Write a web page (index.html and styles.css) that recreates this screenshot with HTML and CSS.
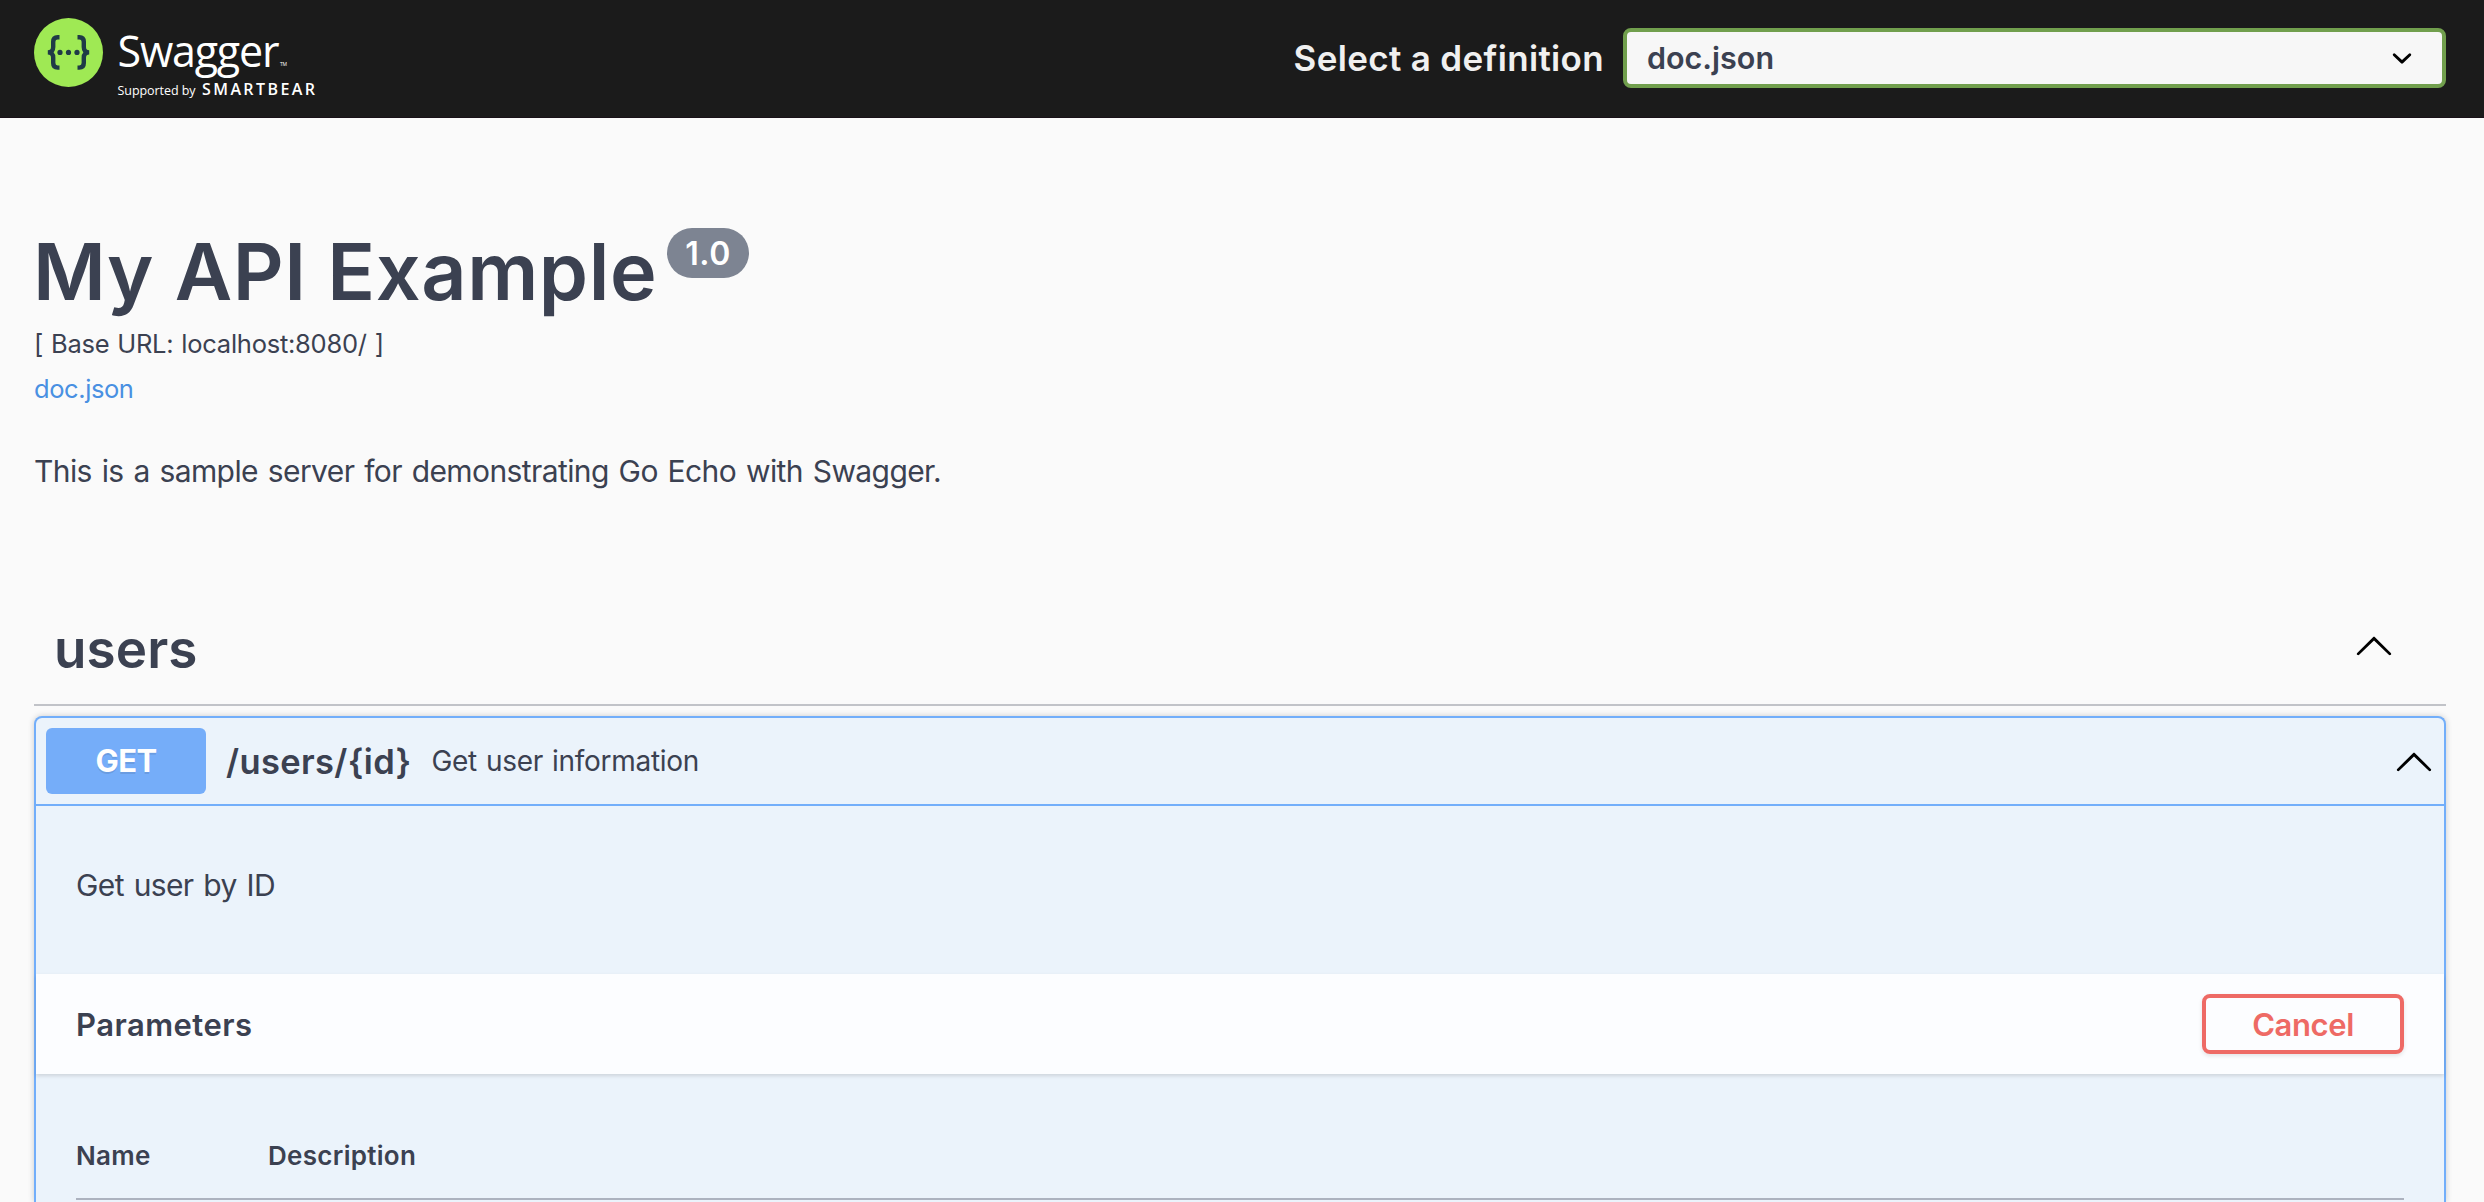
FILE: index.html
```html
<!DOCTYPE html>
<html lang="en">
<head>
<meta charset="utf-8">
<title>Swagger UI</title>
<link rel="stylesheet" href="styles.css">
</head>
<body>
<header class="topbar">
  <a class="logo" aria-label="Swagger">
    <svg class="logo-svg" width="290" height="90" viewBox="0 0 290 90">
      <circle cx="34.5" cy="34.5" r="34.5" fill="#9fe954"/>
      <g fill="none" stroke="#1f3a47" stroke-width="4.4">
        <path d="M25.500 19.200h-1.800c-3.200 0-4.500 1.600-4.500 4.600v5.200c0 3.600-1.500 5.400-5.400 5.400c3.900 0 5.400 1.800 5.400 5.400v5.200c0 3 1.300 4.600 4.500 4.600h1.800"/>
        <path d="M43.500 19.200h1.800c3.200 0 4.500 1.600 4.500 4.600v5.200c0 3.600 1.500 5.400 5.400 5.400c-3.900 0-5.400 1.800-5.400 5.400v5.200c0 3-1.300 4.600-4.500 4.600h-1.800"/>
      </g>
      <g fill="#1f3a47"><circle cx="26" cy="34.400" r="2.600"/><circle cx="34.500" cy="34.400" r="2.600"/><circle cx="43" cy="34.400" r="2.600"/></g>
      <text class="logo-name" x="83.500" y="48.800" textLength="162">Swagger</text>
      <text class="logo-tm" x="246" y="48.400" textLength="7">TM</text>
      <text class="logo-by" x="83.500" y="77" textLength="78">Supported by</text>
      <text class="logo-brand" x="168" y="77" textLength="113">SMARTBEAR</text>
    </svg>
  </a>
  <div class="definition">
    <span class="definition-label">Select a definition</span>
    <div class="select">
      <span class="select-value">doc.json</span>
      <svg class="select-arrow" width="40" height="40" viewBox="0 0 20 20"><path d="M13.418 7.859a.695.695 0 01.978 0 .68.68 0 010 .969l-3.908 3.83a.697.697 0 01-.979 0l-3.908-3.83a.68.68 0 010-.969.695.695 0 01.978 0L10 11l3.418-3.141z"/></svg>
    </div>
  </div>
</header>
<main class="page">
  <section class="info">
    <div class="title-row">
      <h1 class="title">My API Example</h1>
      <span class="version">1.0</span>
    </div>
    <div class="base-url">[ Base URL: localhost:8080/ ]</div>
    <a class="doc-link">doc.json</a>
    <p class="description">This is a sample server for demonstrating Go Echo with Swagger.</p>
  </section>
  <section class="tag">
    <div class="tag-header">
      <h2 class="tag-name">users</h2>
      <svg class="chevron" width="40" height="40" viewBox="0 0 20 20"><path d="M17.418 14.908c.272.268.709.268.979 0s.271-.701 0-.969l-7.908-7.830c-.270-.268-.707-.268-.979 0l-7.908 7.830c-.270.268-.270.701 0 .969.271.268.709.268.979 0L10 7.767l7.418 7.141z"/></svg>
    </div>
    <article class="operation">
      <div class="summary">
        <span class="method">GET</span>
        <span class="path">/users/{id}</span>
        <span class="summary-text">Get user information</span>
        <svg class="chevron" width="40" height="40" viewBox="0 0 20 20"><path d="M17.418 14.908c.272.268.709.268.979 0s.271-.701 0-.969l-7.908-7.830c-.270-.268-.707-.268-.979 0l-7.908 7.830c-.270.268-.270.701 0 .969.271.268.709.268.979 0L10 7.767l7.418 7.141z"/></svg>
      </div>
      <p class="operation-text">Get user by ID</p>
      <div class="section-header">
        <h4 class="section-title">Parameters</h4>
        <button class="cancel">Cancel</button>
      </div>
      <div class="parameters">
        <div class="columns">
          <span class="column-name">Name</span>
          <span>Description</span>
        </div>
      </div>
    </article>
  </section>
</main>
</body>
</html>
```
FILE: styles.css
```css
* {
  box-sizing: border-box;
}

body {
  margin: 0;
  background: #fafafa;
  color: #3b4151;
  font-family: Inter, "Liberation Sans", sans-serif;
}

h1, h2, h4, p {
  margin: 0;
}

.topbar {
  display: flex;
  align-items: flex-start;
  justify-content: space-between;
  height: 118px;
  padding: 18px 38px 0 34px;
  background: #1b1b1b;
  border-bottom: 1px solid #191118;
}

.logo-svg {
  display: block;
}

.logo-svg text {
  fill: #fff;
  font-family: "Open Sans", sans-serif;
}

.logo-svg .logo-name {
  font-size: 43px;
}

.logo-svg .logo-tm {
  font-size: 5px;
}

.logo-svg .logo-by {
  font-size: 12.5px;
}

.logo-svg .logo-brand {
  font-size: 16px;
  font-weight: 600;
}

.definition {
  display: flex;
  align-items: center;
  gap: 19px;
  height: 60px;
  margin-top: 10px;
}

.definition-label {
  color: #f0f0f0;
  font-size: 35px;
  font-weight: 600;
  line-height: 58px;
  letter-spacing: 0.33px;
}

.select {
  display: flex;
  align-items: center;
  justify-content: space-between;
  width: 823px;
  height: 60px;
  padding: 0 20px;
  background: #f7f7f7;
  border: 4px solid #719f4d;
  border-radius: 8px;
}

.select-value {
  padding-bottom: 1px;
  font-size: 30.5px;
  font-weight: 600;
}

.page {
  padding: 110px 38px 0 34px;
}

.info {
  height: 362px;
}

.title-row {
  display: flex;
  align-items: flex-start;
  justify-content: space-between;
  width: 715px;
}

.title {
  margin-left: -1px;
  font-size: 79px;
  font-weight: 600;
  line-height: 86px;
  letter-spacing: 0.6px;
}

.version {
  width: 82px;
  height: 50px;
  border-radius: 25px;
  background: #7d8492;
  color: #fff;
  font-size: 32px;
  font-weight: 600;
  line-height: 51px;
  letter-spacing: 0.578px;
  text-align: center;
}

.base-url {
  margin-top: 10px;
  font-size: 25.5px;
  line-height: 40px;
  letter-spacing: -0.25px;
  word-spacing: 1px;
}

.doc-link {
  display: block;
  margin-top: 5px;
  color: #4990e2;
  font-size: 25.5px;
  line-height: 40px;
  letter-spacing: -0.42px;
}

.description {
  margin-top: 42px;
  font-size: 30px;
  line-height: 40px;
  letter-spacing: -0.6px;
  word-spacing: 2px;
}

.tag-header {
  display: flex;
  align-items: center;
  justify-content: space-between;
  height: 116px;
  padding: 0 52px 0 20px;
  border-bottom: 2px solid #c1c3c8;
}

.tag-name {
  padding-top: 3px;
  font-size: 53px;
  font-weight: 600;
  line-height: 64px;
  letter-spacing: 0.1px;
}

.tag-header .chevron {
  margin-top: -4px;
}

.operation {
  height: 486px;
  margin-top: 10px;
  border: 2px solid #72aefa;
  border-bottom: 0;
  border-radius: 8px 8px 0 0;
  background: #ebf3fb;
  box-shadow: 0 0 6px rgba(0, 0, 0, 0.19);
}

.summary {
  display: flex;
  align-items: center;
  height: 88px;
  padding: 0 10px;
  border-bottom: 2px solid #72aefa;
}

.method {
  width: 160px;
  height: 66px;
  border-radius: 6px;
  background: #75adf9;
  color: #fff;
  font-size: 31px;
  font-weight: 700;
  line-height: 66px;
  letter-spacing: -0.548px;
  text-align: center;
  text-shadow: 0 2px 0 rgba(0, 0, 0, 0.1);
}

.path {
  margin-left: 20px;
  font-size: 34.5px;
  font-weight: 600;
  letter-spacing: 0.35px;
}

.summary-text {
  margin-left: 20px;
  font-size: 28px;
  letter-spacing: -0.3px;
  word-spacing: 1.5px;
}

.summary .chevron {
  margin-left: auto;
}

.operation-text {
  height: 168px;
  padding: 59px 40px 0;
  font-size: 30px;
  line-height: 40px;
  letter-spacing: -0.62px;
  word-spacing: 2px;
}

.section-header {
  display: flex;
  align-items: center;
  justify-content: space-between;
  height: 100px;
  padding: 0 40px;
  background: #fcfdff;
  box-shadow: 0 2px 4px rgba(0, 0, 0, 0.13);
}

.section-title {
  font-size: 31px;
  font-weight: 600;
  letter-spacing: 0.45px;
}

.cancel {
  width: 202px;
  height: 60px;
  padding: 0;
  background: transparent;
  border: 4px solid #ee6a65;
  border-radius: 8px;
  box-shadow: 0 2px 4px rgba(0, 0, 0, 0.1);
  color: #ee6a65;
  font: 600 31px Inter, sans-serif;
  letter-spacing: -0.399px;
}

.parameters {
  padding: 40px 40px 0;
}

.columns {
  display: flex;
  height: 86px;
  padding-top: 22px;
  border-bottom: 2px solid #acb2bf;
  font-size: 26px;
  font-weight: 600;
  line-height: 40px;
  letter-spacing: 0.3px;
}

.column-name {
  width: 192px;
}
```
